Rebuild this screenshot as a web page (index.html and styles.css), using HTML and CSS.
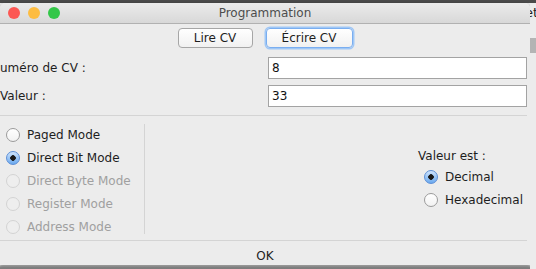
FILE: index.html
```html
<!DOCTYPE html>
<html lang="fr">
<head>
    <meta charset="UTF-8">
    <title>Programmation</title>
    <link rel="stylesheet" href="styles.css">
</head>
<body>
    <div class="desk">
        <div class="window">
            <div class="titlebar">
                <div class="lights">
                    <span class="light red"></span>
                    <span class="light yellow"></span>
                    <span class="light green"></span>
                </div>
                <div class="title">Programmation</div>
            </div>

            <div class="toolbar">
                <button class="btn">Lire CV</button>
                <button class="btn focus">Écrire CV</button>
            </div>

            <div class="form">
                <label class="label cut">Numéro de CV :</label>
                <input class="field" type="text" value="8">
                <label class="label">Valeur :</label>
                <input class="field" type="text" value="33">
            </div>

            <div class="sep"></div>

            <div class="panel">
                <div class="modes">
                    <div class="radio"><span class="dot"></span>Paged Mode</div>
                    <div class="radio on"><span class="dot"></span>Direct Bit Mode</div>
                    <div class="radio off"><span class="dot"></span>Direct Byte Mode</div>
                    <div class="radio off"><span class="dot"></span>Register Mode</div>
                    <div class="radio off"><span class="dot"></span>Address Mode</div>
                </div>
                <div class="vline"></div>
                <div class="format">
                    <div class="format-title">Valeur est :</div>
                    <div class="radio on"><span class="dot"></span>Decimal</div>
                    <div class="radio"><span class="dot"></span>Hexadecimal</div>
                </div>
            </div>

            <div class="sep bottom"></div>
            <div class="ok">OK</div>
        </div>

        <div class="behind">
            <div class="behind-top">et</div>
            <div class="behind-band"></div>
            <div class="behind-rest"></div>
        </div>
    </div>
</body>
</html>
```

FILE: styles.css
```css
body {
    margin: 0;
    background-color: #7a7a7a;
    font-family: "DejaVu Sans", sans-serif;
    font-size: 12px;
    color: #1e1e1e;
    overflow: hidden;
}

.desk {
    display: flex;
    height: 269px;
    border-top: 3px solid #4a4a4a;
    box-sizing: border-box;
    background: linear-gradient(#ececec 0, #ececec 262px, #8d8d8d 264px, #5e5e5e 269px);
}

.window {
    width: 530px;
    height: 262px;
    flex-shrink: 0;
    background-color: #ececec;
    border-radius: 5px 5px 0 0;
    box-shadow: 0 1px 3px rgba(0, 0, 0, 0.45);
    overflow: hidden;
    display: flex;
    flex-direction: column;
}

.titlebar {
    height: 22px;
    display: flex;
    align-items: center;
    position: relative;
    background: linear-gradient(#ebebeb, #d8d8d8);
    border-bottom: 1px solid #b1b1b1;
    box-sizing: border-box;
}

.lights {
    display: flex;
    gap: 8px;
    padding-left: 8px;
}

.light {
    width: 12px;
    height: 12px;
    border-radius: 50%;
}

.red { background-color: #fc5753; }
.yellow { background-color: #fdbc40; }
.green { background-color: #33c748; }

.title {
    position: absolute;
    left: 0;
    right: 0;
    text-align: center;
    color: #4d4d4d;
    font-size: 12px;
}

.toolbar {
    display: flex;
    justify-content: center;
    gap: 13px;
    padding-top: 4px;
    height: 20px;
}

.btn {
    height: 20px;
    font-family: "DejaVu Sans", sans-serif;
    font-size: 12px;
    color: #1e1e1e;
    background: linear-gradient(#ffffff, #f1f1f1);
    border: 1px solid #a6a6a6;
    border-radius: 4px;
    padding: 0;
    width: 75px;
}

.btn.focus {
    width: 87px;
    border-color: #7aaef0;
    box-shadow: 0 0 0 1.5px #9fc7f6;
}

.form {
    display: grid;
    grid-template-columns: 268px 259px;
    row-gap: 6px;
    margin-top: 9px;
}

.label {
    line-height: 22px;
    white-space: nowrap;
}

.label.cut {
    margin-left: -9px;
}

.field {
    height: 22px;
    box-sizing: border-box;
    border: 1px solid #a3a3a3;
    background-color: #fff;
    font-family: "DejaVu Sans", sans-serif;
    font-size: 12px;
    color: #111;
    padding: 0 3px;
    outline: none;
}

.sep {
    width: 527px;
    height: 1px;
    background-color: #d4d4d4;
    margin-top: 8px;
}

.panel {
    display: flex;
    height: 128px;
}

.modes {
    display: flex;
    flex-direction: column;
    padding: 7px 0 0 6px;
    width: 138px;
}

.radio {
    display: flex;
    align-items: center;
    gap: 7px;
    height: 23px;
    white-space: nowrap;
}

.dot {
    width: 14px;
    height: 14px;
    box-sizing: border-box;
    border-radius: 50%;
    border: 1px solid #9b9b9b;
    background: linear-gradient(#ffffff, #f2f2f2);
}

.radio.on .dot {
    border-color: #5d8fd6;
    background: radial-gradient(circle, #1a1a1a 0, #1a1a1a 2.5px, transparent 3px),
        linear-gradient(#cfe4fc, #6aa9ef);
}

.radio.off {
    color: #a0a0a0;
}

.radio.off .dot {
    border-color: #d3d3d3;
    background: #eeeeee;
}

.vline {
    width: 1px;
    background-color: #d4d4d4;
    margin: 8px 0 6px;
}

.format {
    display: flex;
    flex-direction: column;
    align-items: flex-start;
    margin-left: 273px;
    padding-top: 32px;
}

.format-title {
    height: 17px;
    line-height: 17px;
}

.format .radio {
    margin-left: 6px;
}

.sep.bottom {
    margin-top: 0;
}

.ok {
    text-align: center;
    padding-top: 6px;
    line-height: 18px;
    color: #1e1e1e;
}

.behind {
    flex: 1;
    display: flex;
    flex-direction: column;
    overflow: hidden;
}

.behind-top {
    height: 35px;
    background-color: #ececec;
    font-size: 13px;
    line-height: 20px;
    margin-left: -5px;
}

.behind-band {
    height: 15px;
    background-color: #b4b4b4;
}

.behind-rest {
    flex: 1;
    background-color: #ececec;
}
```
